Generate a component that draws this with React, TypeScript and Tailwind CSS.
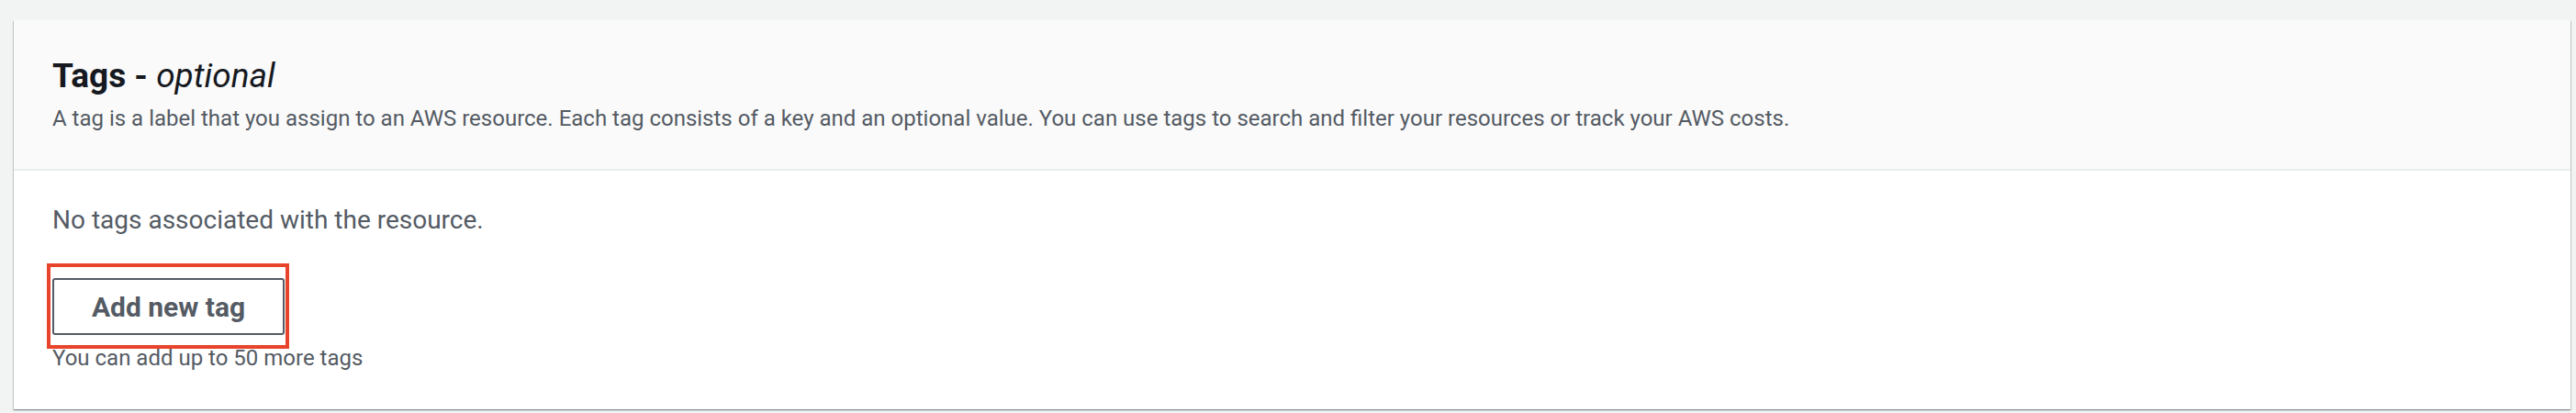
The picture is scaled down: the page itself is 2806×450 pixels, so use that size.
export default function App() {
  const font = { fontFamily: 'Roboto, "Noto Sans", sans-serif' };
  return (
    <div className="w-[2806px] h-[450px] bg-[#f2f3f3] pt-[22px] pl-[15px] pr-[6px]" style={font}>
      <div className="h-[424px] bg-white shadow-[0_1px_1px_0_rgba(0,28,36,0.3),1px_1px_1px_0_rgba(0,28,36,0.15),-1px_1px_1px_0_rgba(0,28,36,0.15)] flex flex-col">
        <div className="h-[164px] bg-[#fafafa] border-b-2 border-[#eaeded] px-[42px] pt-[39px]">
          <h2 className="text-[37px] leading-[44px] font-bold text-[#16191f]">
            Tags - <i className="font-normal italic">optional</i>
          </h2>
          <p className="mt-[8px] text-[24px] leading-[32px] text-[#545b64]">
            A tag is a label that you assign to an AWS resource. Each tag consists of a key and an optional value. You can use tags to search and filter your resources or track your AWS costs.
          </p>
        </div>
        <div className="px-[42px] pt-[36px]">
          <p className="text-[28px] leading-[36px] text-[#545b64]">No tags associated with the resource.</p>
          <div className="relative mt-[45px] w-fit">
            <button className="w-[253px] h-[62px] border-2 border-[#545b64] rounded-[3px] bg-white text-[30px] font-bold text-[#545b64]">
              Add new tag
            </button>
            <div className="absolute left-[-6px] top-[-16px] w-[264px] h-[93px] border-4 border-[#e8432b] pointer-events-none" />
          </div>
          <p className="mt-[9px] text-[24px] leading-[32px] text-[#545b64]">You can add up to 50 more tags</p>
        </div>
      </div>
    </div>
  );
}
